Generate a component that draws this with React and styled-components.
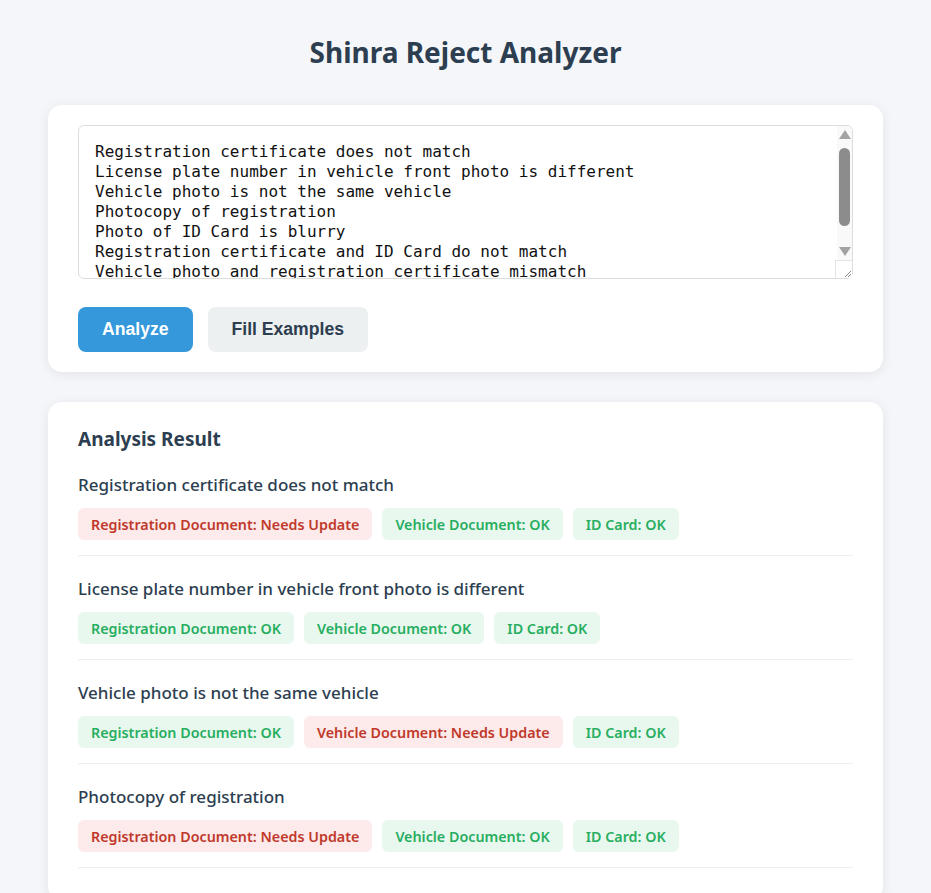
import React, { useState } from "react";
import styled, { createGlobalStyle } from "styled-components";

const GlobalStyle = createGlobalStyle`
  body {
    margin: 0;
    background-color: #f4f6f9;
    font-family: "Noto Sans", "Open Sans", sans-serif;
    color: #2c3e50;
  }
`;

const Page = styled.div`
  padding: 24px 48px 0;
`;

const Title = styled.h1`
  margin: 0 0 25px;
  text-align: center;
  font-size: 28px;
  font-weight: 700;
  line-height: 56px;
  color: #2c3e50;
`;

const Card = styled.section`
  background-color: #ffffff;
  border-radius: 14px;
  box-shadow: 0 2px 12px rgba(0, 0, 0, 0.08);
  padding: ${(props) => props.$pad || "20px 30px"};
  margin-bottom: 30px;
`;

const InputWrap = styled.div`
  position: relative;
`;

const Input = styled.textarea`
  display: block;
  box-sizing: border-box;
  width: 100%;
  height: 154px;
  padding: 16px 32px 16px 16px;
  border: 1px solid #dddddd;
  border-radius: 6px;
  font-family: "DejaVu Sans Mono", monospace;
  font-size: 16px;
  line-height: 20px;
  color: #111111;
  resize: none;
  overflow-y: hidden;
`;

/* drawn scrollbar: the headless browser hides the native one */
const ScrollBar = styled.div`
  position: absolute;
  top: 1px;
  right: 1px;
  bottom: 1px;
  width: 15px;
  display: flex;
  flex-direction: column;
  background-color: #f9f9f9;
  border-radius: 0 5px 5px 0;
  pointer-events: none;
`;

const Arrow = styled.div`
  height: 17px;
  display: flex;
  align-items: center;
  justify-content: center;

  &::before {
    content: "";
    border-left: 6.5px solid transparent;
    border-right: 6.5px solid transparent;
    ${(props) =>
      props.$down
        ? "border-top: 9px solid #a3a3a3;"
        : "border-bottom: 9px solid #a3a3a3;"}
  }
`;

const Track = styled.div`
  flex: 1;
  padding-top: 5px;
`;

const Thumb = styled.div`
  width: 11px;
  height: 78px;
  margin: 0 auto;
  border-radius: 6px;
  background-color: #8c8c8c;
`;

const Corner = styled.div`
  height: 17px;
  background-color: #ffffff;
  border-top: 1px solid #e4e4e4;
  border-left: 1px solid #e4e4e4;
  margin-left: -2px;
  display: flex;
  align-items: flex-end;
  justify-content: flex-end;
`;

const Actions = styled.div`
  display: flex;
  gap: 15px;
  margin-top: 28px;
`;

const Button = styled.button`
  font-family: "Liberation Sans", Arial, sans-serif;
  font-size: 17.6px;
  font-weight: 700;
  padding: 12px 24px;
  border: none;
  border-radius: 8px;
  cursor: pointer;
  background-color: ${(props) => (props.$primary ? "#3498db" : "#ecf0f1")};
  color: ${(props) => (props.$primary ? "#ffffff" : "#2c3e50")};
`;

const ResultTitle = styled.h2`
  margin: 0 0 22px;
  font-size: 19px;
  font-weight: 700;
  line-height: 26px;
`;

const Item = styled.div`
  padding: 0 0 15px;
  margin-bottom: 22px;
  border-bottom: 1px solid #eeeeee;
`;

const ItemText = styled.div`
  font-size: 17px;
  font-weight: 500;
  line-height: 22px;
  color: #2c3e50;
  margin-bottom: 12px;
`;

const Badges = styled.div`
  display: flex;
  flex-wrap: wrap;
  gap: 10px;
`;

const Badge = styled.span`
  display: inline-flex;
  align-items: center;
  height: 32px;
  padding: 0 13px;
  border-radius: 6px;
  font-size: 14.3px;
  font-weight: 600;
  background-color: ${(props) => (props.$ok ? "#e9f8ef" : "#fdeaea")};
  color: ${(props) => (props.$ok ? "#27ae60" : "#c0392b")};
`;

const examples = [
  "Registration certificate does not match",
  "License plate number in vehicle front photo is different",
  "Vehicle photo is not the same vehicle",
  "Photocopy of registration",
  "Photo of ID Card is blurry",
  "Registration certificate and ID Card do not match",
  "Vehicle photo and registration certificate mismatch",
  "ID Card is expired",
  "Vehicle front photo is blurry",
];

const results = [
  { text: examples[0], ok: [false, true, true] },
  { text: examples[1], ok: [true, true, true] },
  { text: examples[2], ok: [true, false, true] },
  { text: examples[3], ok: [false, true, true] },
];

const labels = ["Registration Document", "Vehicle Document", "ID Card"];

function App() {
  const [text, setText] = useState(examples.join("\n"));

  return (
    <Page>
      <GlobalStyle />
      <Title>Shinra Reject Analyzer</Title>
      <Card>
        <InputWrap>
          <Input value={text} onChange={(e) => setText(e.target.value)} />
          <ScrollBar>
            <Arrow />
            <Track>
              <Thumb />
            </Track>
            <Arrow $down />
            <Corner>
              <svg width="10" height="10" viewBox="0 0 10 10">
                <path d="M9 3 L3 9 M9 6 L6 9" stroke="#8a8a8a" strokeWidth="1" />
              </svg>
            </Corner>
          </ScrollBar>
        </InputWrap>
        <Actions>
          <Button $primary>Analyze</Button>
          <Button onClick={() => setText(examples.join("\n"))}>
            Fill Examples
          </Button>
        </Actions>
      </Card>
      <Card $pad="24px 30px 10px">
        <ResultTitle>Analysis Result</ResultTitle>
        {results.map((row) => (
          <Item key={row.text}>
            <ItemText>{row.text}</ItemText>
            <Badges>
              {labels.map((label, j) => (
                <Badge key={label} $ok={row.ok[j]}>
                  {label}: {row.ok[j] ? "OK" : "Needs Update"}
                </Badge>
              ))}
            </Badges>
          </Item>
        ))}
      </Card>
    </Page>
  );
}

export default App;
